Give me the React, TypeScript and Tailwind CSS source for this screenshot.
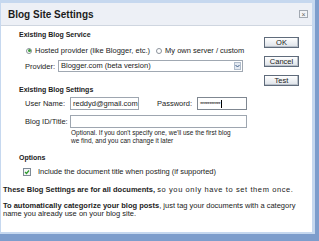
import React from 'react';

const btn =
  'w-[35px] h-[11px] flex items-center justify-center border border-[#5f6b7b] bg-gradient-to-b from-white to-[#dde2e8] text-[7.5px] leading-none text-[#222] shadow-[inset_-1px_-1px_0_#b9c0c9]';
const input = 'h-[13px] border border-[#9ea6b0] bg-white flex items-center px-[2px] text-[7.5px] leading-none';

function Radio({ on }: { on?: boolean }) {
  return (
    <span className="w-[6px] h-[6px] rounded-full border border-[#8b929b] bg-white flex items-center justify-center shrink-0">
      {on && <span className="w-[3px] h-[3px] rounded-full bg-[#3c9c3c]" />}
    </span>
  );
}

export default function App() {
  return (
    <div className="w-[319px] h-[241px] bg-[#7d9dcc] font-['Liberation_Sans',Arial,sans-serif] text-[#222]">
      <div className="w-[315px] h-[234px] bg-[#c6d8ef] pt-[3px] pl-[1px]">
        <div className="w-[311px] h-[229px] bg-white flex flex-col">
          {/* title bar */}
          <div className="h-[23px] bg-[#edf0f6] border-b border-[#cfd6e0] flex items-center justify-between pl-[7px] pr-[4px]">
            <span className="text-[10px] font-bold text-[#1c1c1c]">Blog Site Settings</span>
            <span className="w-[9px] h-[8px] border border-[#a2a9b2] bg-[#f3f4f6] flex items-center justify-center text-[7px] leading-none text-[#666]">
              ×
            </span>
          </div>

          <div className="flex">
            <div className="w-[250px] flex flex-col text-[7.5px] leading-[9px]">
              <div className="mt-[4px] pl-[18px] font-bold text-[7px]">Existing Blog Service</div>
              <div className="mt-[7px] pl-[25px] flex items-center h-[9px]">
                <Radio on />
                <span className="ml-[3px]">Hosted provider (like Blogger, etc.)</span>
                <span className="ml-[6px]"><Radio /></span>
                <span className="ml-[3px]">My own server / custom</span>
              </div>
              <div className="mt-[5px] pl-[24px] flex items-center">
                <span className="w-[33px]">Provider:</span>
                <div className="w-[185px] h-[12px] border border-[#a0a8b2] flex items-center justify-between pl-[2px] pr-[1px]">
                  <span className="leading-none">Blogger.com (beta version)</span>
                  <span className="w-[7px] h-[8px] border border-[#b0bccb] bg-[#e3e9f1] flex items-center justify-center">
                    <svg width="5" height="4" viewBox="0 0 5 4">
                      <path d="M0.5 1 L2.5 3 L4.5 1" fill="none" stroke="#3b5a86" strokeWidth="1" />
                    </svg>
                  </span>
                </div>
              </div>

              <div className="mt-[13px] pl-[18px] font-bold text-[7px]">Existing Blog Settings</div>
              <div className="mt-[3px] pl-[24px] flex items-center">
                <span className="w-[45px]">User Name:</span>
                <div className={`${input} w-[69px]`}>reddyd@gmail.com</div>
                <span className="ml-[18px] w-[40px]">Password:</span>
                <div className={`${input} w-[50px] !border-[#7f8791]`}>
                  <span className="text-[6px] tracking-[-0.5px]">***********</span>
                  <span className="w-px h-[8px] bg-black ml-[1px]" />
                </div>
              </div>
              <div className="mt-[5px] pl-[24px] flex items-center">
                <span className="w-[45px]">Blog ID/Title:</span>
                <div className={`${input} w-[177px] h-[12px]`} />
              </div>
              <div className="mt-[1px] pl-[70px] text-[6.5px] leading-[8px]">
                Optional. If you don't specify one, we'll use the first blog
                <br />
                we find, and you can change it later
              </div>

              <div className="mt-[8px] pl-[18px] font-bold text-[7px]">Options</div>
              <div className="mt-[5px] pl-[22px] flex items-center h-[9px]">
                <span className="w-[8px] h-[8px] border border-[#7f8a96] bg-[#f4f6f8] flex items-center justify-center">
                  <svg width="6" height="6" viewBox="0 0 6 6">
                    <path d="M1 3 L2.5 4.5 L5 1.5" fill="none" stroke="#2f9b2f" strokeWidth="1.2" />
                  </svg>
                </span>
                <span className="ml-[7px]">Include the document title when posting (if supported)</span>
              </div>
            </div>

            <div className="ml-auto mr-[13px] mt-[11px] flex flex-col gap-[8px]">
              <div className={btn}>OK</div>
              <div className={btn}>Cancel</div>
              <div className={btn}>Test</div>
            </div>
          </div>

          <div className="mt-[9px] pl-[2px] text-[7.5px] leading-[9px] whitespace-nowrap">
            <span className="font-bold">These Blog Settings are for all documents,</span>{' '}
            <span className="tracking-[0.6px]">so you only have to set them once.</span>
          </div>
          <div className="mt-[8px] pl-[2px] text-[7.5px] leading-[8px] whitespace-nowrap">
            <span className="font-bold">To automatically categorize your blog posts</span>, just tag your documents with a category
            <br />
            name you already use on your blog site.
          </div>
        </div>
      </div>
    </div>
  );
}
